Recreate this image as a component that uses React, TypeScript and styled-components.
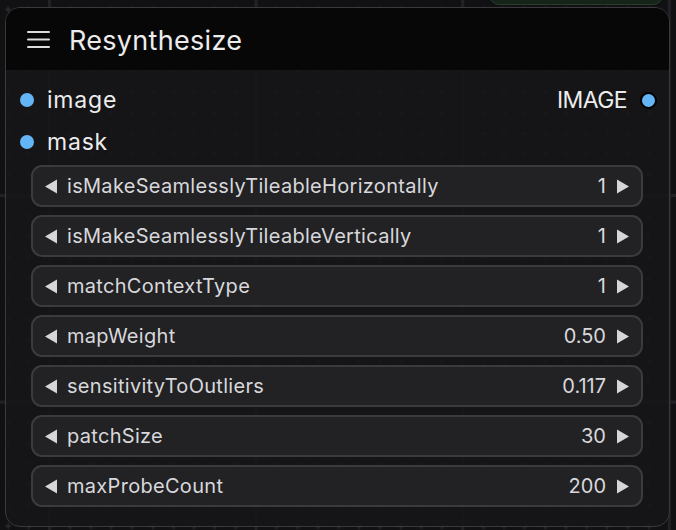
import React from 'react';
import styled, { createGlobalStyle } from 'styled-components';

const GlobalStyle = createGlobalStyle`
  html, body {
    margin: 0;
    padding: 0;
    background: #111113;
    overflow: hidden;
  }
  body {
    font-family: Inter, "Noto Sans", sans-serif;
  }
`;

const CELL = 206.6;
const STEP = CELL / 10;

const widgets = [
  { name: 'isMakeSeamlesslyTileableHorizontally', value: '1' },
  { name: 'isMakeSeamlesslyTileableVertically', value: '1' },
  { name: 'matchContextType', value: '1' },
  { name: 'mapWeight', value: '0.50' },
  { name: 'sensitivityToOutliers', value: '0.117' },
  { name: 'patchSize', value: '30' },
  { name: 'maxProbeCount', value: '200' },
];

const CanvasGrid = () => {
  const pluses = [];
  for (let i = 0; i < 10; i++) {
    for (let j = 0; j < 10; j++) {
      if (i === 0 || j === 0) continue;
      const cx = 1.5 + i * STEP;
      const cy = 1.5 + j * STEP;
      pluses.push(
        <g key={`${i}-${j}`} fill="#2a2b2e">
          <rect x={cx - 3} y={cy - 0.75} width={6} height={1.5} />
          <rect x={cx - 0.75} y={cy - 3} width={1.5} height={6} />
        </g>
      );
    }
  }
  return (
    <GridSvg width="676" height="530">
      <defs>
        <pattern
          id="grid"
          patternUnits="userSpaceOnUse"
          width={CELL}
          height={CELL}
          patternTransform="translate(48 -12.6)"
        >
          <rect x={0} y={0} width={3} height={CELL} fill="#212226" />
          <rect x={0} y={0} width={CELL} height={3} fill="#212226" />
          {pluses}
        </pattern>
      </defs>
      <rect width="676" height="530" fill="url(#grid)" />
    </GridSvg>
  );
};

const MenuIcon = () => (
  <svg width="23" height="19" viewBox="0 0 23 19">
    <g stroke="#dcdcdc" strokeWidth="2" strokeLinecap="round">
      <line x1="1" y1="2" x2="22" y2="2" />
      <line x1="1" y1="9.5" x2="22" y2="9.5" />
      <line x1="1" y1="17" x2="22" y2="17" />
    </g>
  </svg>
);

const Arrow = ({ dir }: { dir: 'left' | 'right' }) => (
  <svg width="12" height="15" viewBox="0 0 12 15">
    <path
      d={dir === 'left' ? 'M12 0.5 L0 7.5 L12 14.5 Z' : 'M0 0.5 L12 7.5 L0 14.5 Z'}
      fill="#d6d6da"
    />
  </svg>
);

const App = () => {
  return (
    <Page>
      <GlobalStyle />
      <CanvasGrid />
      <OtherNode />
      <Node>
        <TitleBar>
          <MenuIcon />
          <Title>Resynthesize</Title>
        </TitleBar>
        <Body>
          <IoRow>
            <Slot>
              <Dot />
              <SlotLabel>image</SlotLabel>
            </Slot>
            <Slot>
              <SlotLabel tight>IMAGE</SlotLabel>
              <Dot outlined />
            </Slot>
          </IoRow>
          <IoRow>
            <Slot>
              <Dot />
              <SlotLabel>mask</SlotLabel>
            </Slot>
          </IoRow>
          <WidgetList>
            {widgets.map((w) => (
              <Widget key={w.name}>
                <Arrow dir="left" />
                <WidgetName>{w.name}</WidgetName>
                <WidgetValue>{w.value}</WidgetValue>
                <Arrow dir="right" />
              </Widget>
            ))}
          </WidgetList>
        </Body>
      </Node>
    </Page>
  );
};

const Page = styled.div`
  position: relative;
  width: 676px;
  height: 530px;
  overflow: hidden;
`;

const GridSvg = styled.svg`
  position: absolute;
  left: 0;
  top: 0;
`;

const OtherNode = styled.div`
  position: absolute;
  left: 489px;
  top: -20px;
  width: 172px;
  height: 23px;
  background: #17241a;
  border: 1px solid #2c3a2e;
  border-radius: 0 0 10px 10px;
`;

const Node = styled.div`
  position: absolute;
  left: 5px;
  top: 7px;
  width: 663px;
  height: 518px;
  border: 1px solid #3a3a3d;
  border-radius: 15px;
  overflow: hidden;
  background: rgba(22, 22, 24, 0.88);
  display: flex;
  flex-direction: column;
`;

const TitleBar = styled.div`
  height: 62px;
  display: flex;
  align-items: center;
  gap: 19px;
  padding-left: 21px;
  background: rgba(6, 6, 6, 0.93);
  flex-shrink: 0;
`;

const Title = styled.div`
  color: #ececec;
  font-size: 27px;
  font-weight: 400;
  letter-spacing: 0.3px;
  padding-top: 2px;
`;

const Body = styled.div`
  display: flex;
  flex-direction: column;
  padding: 9px 0 0;
`;

const IoRow = styled.div`
  height: 42px;
  display: flex;
  align-items: center;
  justify-content: space-between;
  padding: 0 12px 0 14px;
`;

const Slot = styled.div`
  display: flex;
  align-items: center;
  gap: 13px;
`;

const Dot = styled.div<{ outlined?: boolean }>`
  width: ${(p) => (p.outlined ? '17px' : '14px')};
  height: ${(p) => (p.outlined ? '17px' : '14px')};
  border-radius: 50%;
  background: #64b5f6;
  box-sizing: border-box;
  border: ${(p) => (p.outlined ? '2px solid #000' : 'none')};
`;

const SlotLabel = styled.span<{ tight?: boolean }>`
  color: #ececec;
  font-size: 23px;
  letter-spacing: ${(p) => (p.tight ? '-0.6px' : '0.8px')};
`;

const WidgetList = styled.div`
  display: flex;
  flex-direction: column;
  gap: 8px;
  margin: 2px 26px 0 25px;
`;

const Widget = styled.div`
  height: 42px;
  box-sizing: border-box;
  display: flex;
  align-items: center;
  padding: 0 12px 0 12px;
  background: #222224;
  border: 2px solid #3b3b3e;
  border-radius: 11px;
  color: #d8d8dc;
  font-size: 20px;
`;

const WidgetName = styled.span`
  margin-left: 10px;
  flex: 1;
  letter-spacing: 0.3px;
`;

const WidgetValue = styled.span`
  margin-right: 11px;
`;

export default App;
